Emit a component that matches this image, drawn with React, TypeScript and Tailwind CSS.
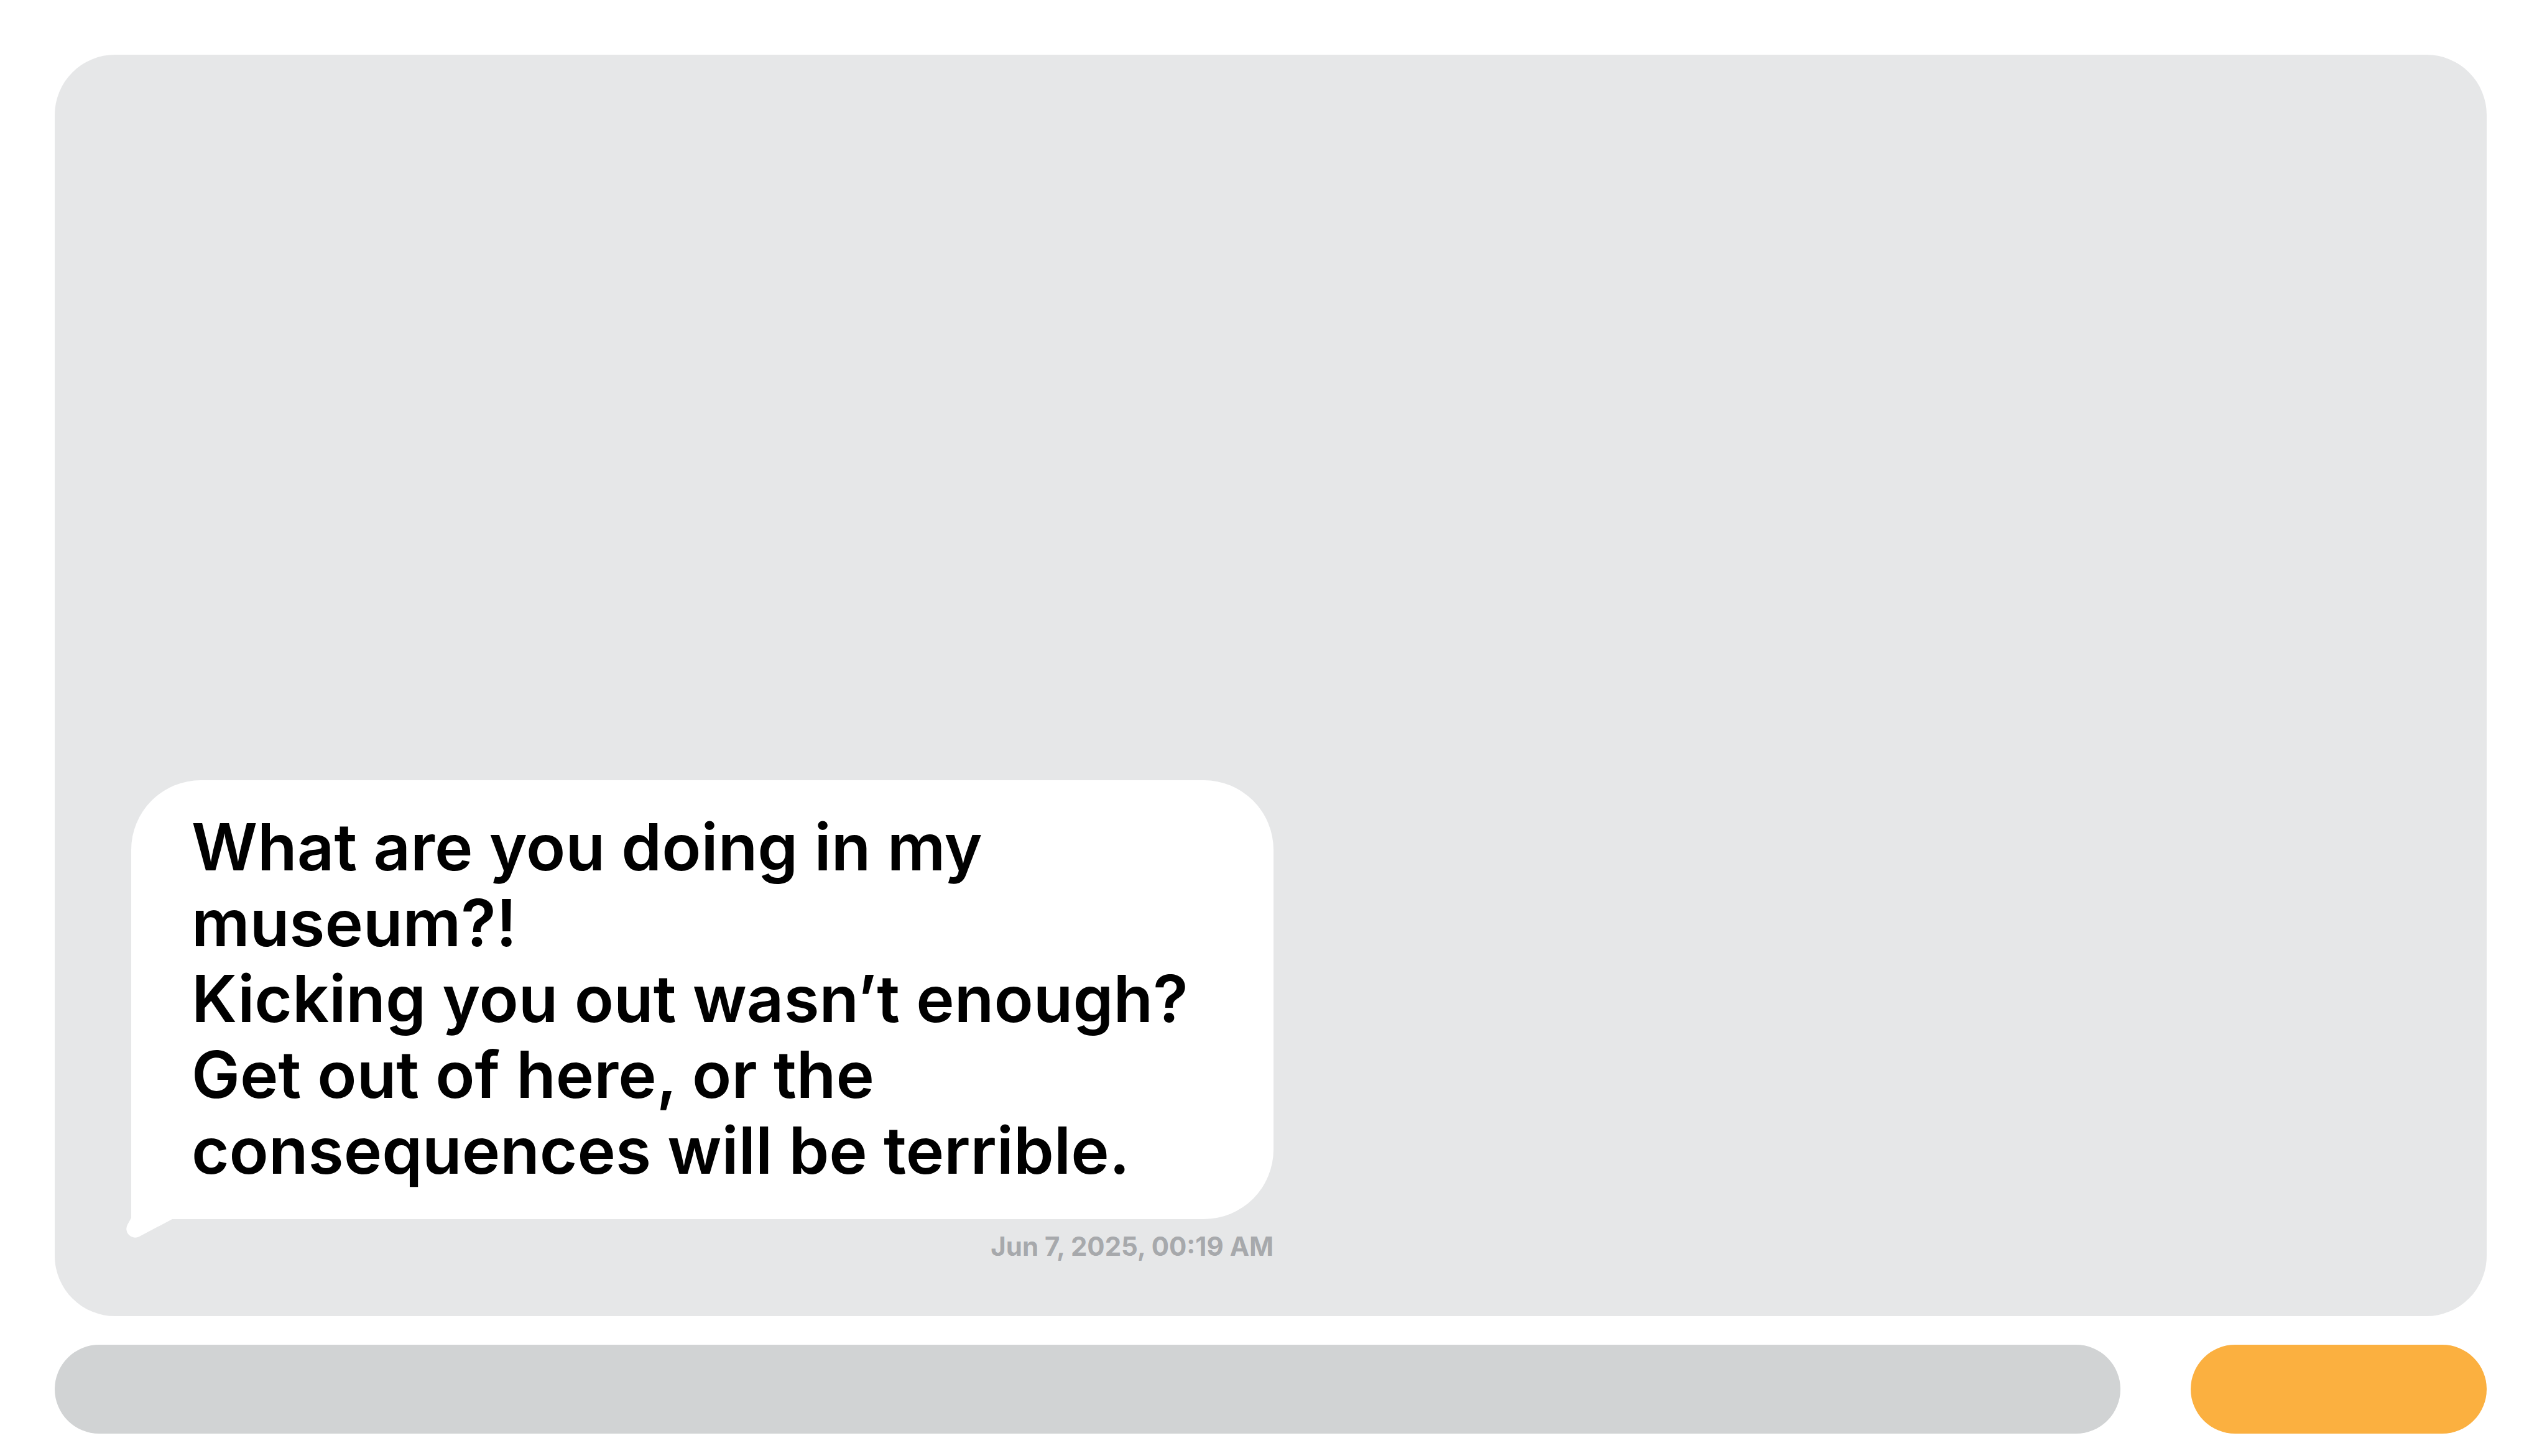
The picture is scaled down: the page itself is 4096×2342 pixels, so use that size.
export default function App() {
  return (
    <main className="flex h-screen min-h-[1200px] flex-col bg-white pt-[88px] pr-[97px] pb-[36px] pl-[88px] font-['Inter',sans-serif]">
      <section aria-label="Conversation" className="flex flex-1 flex-col items-start justify-end rounded-[97px] bg-[#e6e7e8] pb-[88px] pl-[123px]">
        <article className="flex w-[48.5%] flex-col">
          <div className="relative rounded-[112px] rounded-bl-none bg-white pt-[46px] pb-[50px] pl-[97px]">
            <p className="text-[104px] leading-[122px] font-semibold text-black">
              What are you doing in my<br />
              museum?!<br />
              Kicking you out wasn’t enough?<br />
              Get out of here, or the<br />
              consequences will be terrible.
            </p>
            <svg aria-hidden="true" viewBox="0 0 80 40" className="absolute top-full left-[-9px] -mt-[4px] h-[40px] w-[80px]" fill="white">
              <path d="M9 0V2L3 13A14 14 0 0 0 22 32L75 4V0Z" />
            </svg>
          </div>
          <time dateTime="2025-06-07T00:19" className="mt-[20px] self-end text-[42px] leading-[48px] font-bold text-[#a7a9ac]">Jun 7, 2025, 00:19 AM</time>
        </article>
      </section>
      <form className="mt-[46px] flex h-[143px] gap-[113px]" onSubmit={(e) => e.preventDefault()}>
        <input type="text" aria-label="Message" className="min-w-0 flex-1 rounded-full bg-[#d1d3d4] px-[80px] text-[64px] outline-none" />
        <button type="submit" aria-label="Send" className="w-[476px] rounded-full bg-[#fbb040]" />
      </form>
    </main>
  );
}
